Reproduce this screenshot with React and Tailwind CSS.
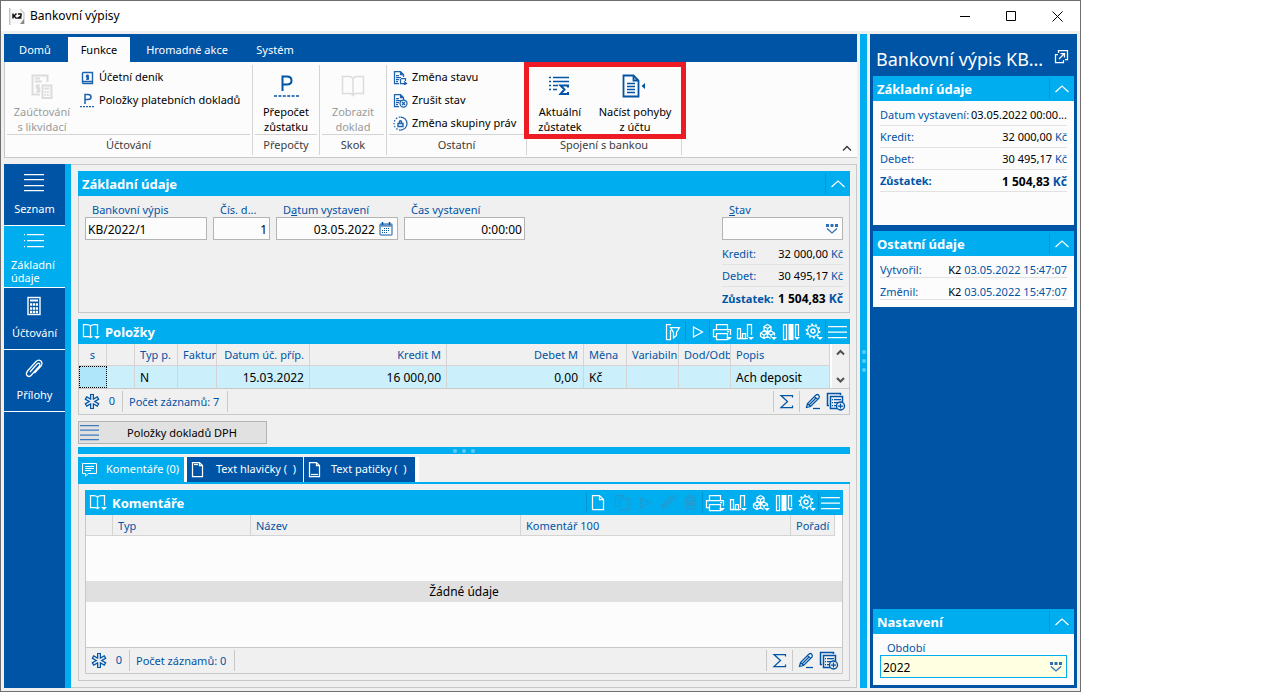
import clsx from 'clsx';

function Icon({ w = 18, h = 18, className, children }) {
    return (
        <svg width={w} height={h} viewBox={`0 0 ${w} ${h}`} className={clsx('shrink-0', className)} fill="none" stroke="currentColor" strokeWidth="1.25" aria-hidden="true">
            {children}
        </svg>
    );
}

/* ---------- icons ---------- */

const Caret = ({ x, y }) => <path d={`M${x} ${y}h6l-3 3z`} fill="currentColor" stroke="none" />;

const BookIcon = () => (
    <Icon w={19} h={17}>
        <path d="M8.500 3C7.500 1.500 6 1.500 4.500 1.500H1.500V13.500H6.500L8.500 14.500L10.500 13.500M8.500 3C9.500 1.500 11 1.500 12.500 1.500H15.500V11.500M8.500 3V14.500" />
        <Caret x={12} y={13} />
    </Icon>
);

const FilterIcon = () => (
    <Icon w={18} h={18}>
        <path d="M6 1.500H1.500V16.500H5.500V7M5.500 4.500H14.500L11.500 9.500V12.500L8.500 15V9.500Z" />
    </Icon>
);

const PlayIcon = () => (
    <Icon w={12} h={14}>
        <path d="M1.500 2V12L10.500 7Z" />
    </Icon>
);

const PrinterIcon = () => (
    <Icon w={20} h={18}>
        <path d="M4.500 6.500V1.500H15.500V6.500M4.500 13.500H1.500V6.500H18.500V12M4.500 10.500H15.500V16.500H4.500ZM15 8.500H17" />
        <Caret x={14} y={14} />
    </Icon>
);

const ChartIcon = () => (
    <Icon w={18} h={18}>
        <path d="M1.500 5.500H4.500V15.500H1.500ZM6.500 10.500H9.500V15.500H6.500ZM11.500 14V1.500H15.500V12" />
        <path d="M1 15.500H12" />
        <Caret x={12} y={14} />
    </Icon>
);

const CubesIcon = () => (
    <Icon w={18} h={18}>
        <path d="M8.500 1.500L12 3.500V7L8.500 9L5 7V3.500ZM5 8L8.500 10V13.500L5 15.500L1.500 13.500V10ZM12 8L15.500 10V12.500M12 8L8.500 10V13.500L11.500 15.500M5 3.500L8.500 5.500L12 3.500M8.500 5.500V9M1.500 10L5 12L8.500 10L12 12L15.500 10M5 12V15.500M12 12V14" />
        <Caret x={12} y={14} />
    </Icon>
);

const ColumnsIcon = () => (
    <Icon w={18} h={18}>
        <path d="M1.500 1.500H4.500V16.500H1.500ZM13.500 14V1.500H16.500V13" />
        <path d="M6.500 1H11.500V17H6.500Z" fill="currentColor" stroke="none" />
        <Caret x={12} y={14} />
    </Icon>
);

const GearIcon = () => (
    <Icon w={18} h={18}>
        <circle cx="8" cy="8" r="5.500" />
        <circle cx="8" cy="8" r="6.800" strokeWidth="1.400" strokeDasharray="2 2.270" />
        <circle cx="8" cy="8" r="2" strokeWidth="1.500" />
        <Caret x={12} y={14} />
    </Icon>
);

const MenuIcon = () => (
    <Icon w={20} h={16}>
        <path d="M0 2.500H19M0 8H19M0 13.500H19" />
    </Icon>
);

const NewIcon = () => (
    <Icon w={16} h={17}>
        <path d="M1.500 1.500H8.500L12.500 5.500V15.500H1.500ZM8.500 1.500V5.500H12.500" />
    </Icon>
);

const CopyIcon = () => (
    <Icon w={16} h={17}>
        <path d="M4 12.500H1.500V1.500H9.500V4M5.500 4.500H14.500V15.500H5.500Z" />
    </Icon>
);

const PencilIcon = ({ underline = true }) => (
    <Icon w={16} h={17}>
        <path d="M1.500 14.500L2.500 10.500L11 2Q12.500 1 13.500 2Q15 3.500 14 5L5.500 13.500ZM9.500 3.500L12.500 6.500M2.500 10.500L5.500 13.500M4.500 11.500L11 5" />
        {underline && <path d="M8 15.500H15" />}
    </Icon>
);

const TrashIcon = () => (
    <Icon w={13} h={17}>
        <path d="M1 3.500H12M4.500 3V1.500H8.500V3M2.500 4V14.500H10.500V4M4.500 6V12M6.500 6V12M8.500 6V12" />
    </Icon>
);

const SumIcon = () => (
    <Icon w={15} h={16}>
        <path d="M13.500 3.500V1.500H2L8.500 7.500L2 13.500H13.500V11.500" />
    </Icon>
);

const ListAddIcon = () => (
    <Icon w={20} h={20}>
        <path d="M3 13.500H1.500V1.500H14.500V3M11 16.500H4.500V4.500H16.500V10" strokeWidth="1.500" />
        <path d="M6 7.500H7M8 7.500H15M6 10.500H7M8 10.500H12M6 13.500H7M8 13.500H10" />
        <circle cx="14.500" cy="14" r="4" strokeWidth="1.400" />
        <path d="M12 14H17M14.500 11.500V16.500" />
    </Icon>
);

const StarIcon = () => (
    <Icon w={16} h={17}>
        <g stroke="#0054a6" strokeWidth="4">
            <path d="M8 1V16M1.500 4.700L14.500 12.300M1.500 12.300L14.500 4.700" />
        </g>
        <g stroke="#f0f0f0" strokeWidth="1.500">
            <path d="M8 2V15M2.600 5.300L13.400 11.700M2.600 11.700L13.400 5.300" />
        </g>
    </Icon>
);

const PickIcon = () => (
    <Icon w={14} h={12} className="text-[#2f70b5]">
        <path d="M1 1H4V4H1ZM5.500 1H8.500V4H5.500ZM10 1H13V4H10Z" fill="currentColor" stroke="none" />
        <path d="M2 5.500L7 10L12 5.500" />
    </Icon>
);

const CalendarIcon = () => (
    <Icon w={14} h={14} className="text-[#5c8fc4]">
        <rect x="1" y="2" width="12" height="11" rx="1" fill="#fff" strokeWidth="1.500" />
        <path d="M1 3.500H13" strokeWidth="2.500" />
        <path d="M3.500 0V3M10.500 0V3" stroke="#0054a6" strokeWidth="1.500" />
        <path d="M5 6.500H11M3 8.500H11M3 10.500H9" stroke="#0054a6" strokeWidth="1" strokeDasharray="1 1" />
    </Icon>
);

const ChevronUp = () => (
    <Icon w={16} h={10}>
        <path d="M1.500 8L8 2L14.500 8" />
    </Icon>
);

const InvoiceIcon = () => (
    <Icon w={24} h={26}>
        <path d="M10 21.500H2.500V2.500H17.500V9M5 5.500H10M5 8.500H12" strokeWidth="2" />
        <path d="M12.500 12.500H21.500V25H12.500ZM14.500 15.500H19.500" strokeWidth="2" />
        <path d="M14.500 19H20M14.500 22H20" strokeWidth="2" strokeDasharray="1.500 1" />
        <path d="M10 12.500H6.500V15H9.500V18.500H6M8 11V20" strokeWidth="1.500" />
    </Icon>
);

const LedgerIcon = () => (
    <Icon w={13} h={14}>
        <path d="M2.500 1.500H11.500V12.500H2.500Q1.500 12.500 1.500 11V2.500Q1.500 1.500 2.500 1.500ZM2 10.500H11.500" strokeWidth="1.400" />
        <path d="M8 4.500H5.500V6H7.500V8H5M6.500 3.500V9" />
    </Icon>
);

const PaySmallIcon = () => (
    <Icon w={15} h={15}>
        <path d="M5 11V1.500H8Q11 1.500 11 4Q11 6.500 8 6.500H5" strokeWidth="1.500" />
        <path d="M0 13.500H15" strokeDasharray="2 1" />
    </Icon>
);

const PayIcon = () => (
    <Icon w={25} h={24}>
        <path d="M8.500 17V2.500H13Q17.500 2.500 17.500 6.500Q17.500 10.500 13 10.500H8.500" strokeWidth="2" />
        <path d="M0 22H25" strokeWidth="1.500" strokeDasharray="3 1.400" />
    </Icon>
);

const OpenBookIcon = () => (
    <Icon w={24} h={22}>
        <path d="M12 4Q11 1.500 8 1.500H1.500V18.500H9Q11 18.500 12 20.500Q13 18.500 15 18.500H22.500V1.500H16Q13 1.500 12 4V20" strokeWidth="1.500" />
    </Icon>
);

const DocIcon = ({ kind }) => (
    <Icon w={15} h={15}>
        <path d="M6 13.500H1.500V1.500H7.500L10.500 4.500V7M7.500 1.500V4.500H10.500M3 5.500H6M3 7.500H8M3 9.500H6M3 11.500H5" />
        {kind === 'change' && <path d="M7.500 9V13.500H13M11 11.500L13.500 13.500L11 15M8 8.500H12.500V11" />}
        {kind === 'cancel' && (
            <>
                <circle cx="10.500" cy="10.500" r="3.500" fill="#fcfcfc" />
                <path d="M9 9L12 12M12 9L9 12" />
            </>
        )}
    </Icon>
);

const RightsIcon = () => (
    <Icon w={15} h={15}>
        <path d="M7.500 1A6.500 6.500 0 0 1 7.500 14" />
        <path d="M7.500 14A6.500 6.500 0 0 1 7.500 1" strokeDasharray="1.500 1.500" />
        <path d="M5 7.500H10V10.500H5ZM6.500 7V5.500Q7.500 4 8.500 5.500V7" strokeWidth="1.400" />
    </Icon>
);

const BalanceIcon = () => (
    <Icon w={24} h={20}>
        <path d="M5 1.500H21M5 5.500H21M5 9.500H10M5 13.500H9" strokeWidth="1.600" />
        <path d="M1 1.500H3M1 5.500H3M1 9.500H3M1 13.500H3" strokeWidth="1.600" />
        <path d="M20 11.500V9.500H12.500L16.500 13.500L12.500 18H20V16" strokeWidth="2" />
    </Icon>
);

const ImportIcon = () => (
    <Icon w={26} h={24}>
        <path d="M1.500 1.500H11.500L16.500 6.500V22.500H1.500ZM11.500 1.500V6.500H16.500" strokeWidth="1.800" />
        <path d="M5 9.500H13M5 12.500H13M5 15.500H13M5 18.500H13" strokeWidth="1.300" />
        <path d="M23 9V15L19.500 12Z" fill="currentColor" stroke="none" />
    </Icon>
);

const CommentIcon = () => (
    <Icon w={17} h={16}>
        <path d="M1.500 1.500H15.500V11.500H7.500L4.500 14V11.500H1.500ZM4 4.500H13M4 6.500H13M4 8.500H10" strokeWidth="1" />
    </Icon>
);

const TextIcon = ({ footer }) => (
    <Icon w={13} h={17}>
        <path d="M1.500 1.500H8.500L11.500 4.500V15.500H1.500ZM8.500 1.500V4.500H11.500" />
        <path d={footer ? 'M3 13.500H10' : 'M3 3.500H7'} />
    </Icon>
);

const NavIcon = ({ name }) => (
    <Icon w={24} h={22}>
        {name === 'list' && <path d="M1 2.500H21M1 7.500H21M1 13.500H21M1 18.500H21" />}
        {name === 'detail' && <path d="M4 4.500H21M4 10.500H21M4 16.500H21M1 4.500H2M1 10.500H2M1 16.500H2" />}
        {name === 'calc' && (
            <>
                <rect x="5" y="1.500" width="12" height="17" strokeWidth="1.400" />
                <path d="M7 4.500H15" strokeWidth="2" />
                <path d="M7 8.500H15M7 12.500H15M7 16H15" strokeWidth="2.400" strokeDasharray="2.200 .7" />
            </>
        )}
        {name === 'clip' && (
            <path d="M7 14L14 6Q15.500 4.500 16.500 5.500Q17.500 6.500 16.500 8L8 17.500Q6 19.500 4 17.500Q2.500 15.500 4.500 13L13 3.500Q15.500 1 18 3Q20 5.500 18 8L11.500 15" />
        )}
    </Icon>
);

/* ---------- shared parts ---------- */

function PanelHeader({ title, book, children }) {
    return (
        <div className="flex h-[25px] shrink-0 items-center bg-[#00adef] pr-px text-white">
            {book && (
                <button type="button" aria-label="Kniha" className="ml-1">
                    <BookIcon />
                </button>
            )}
            <h2 className="flex-1 truncate px-1 text-[13px] leading-5 font-bold">{title}</h2>
            {children}
        </div>
    );
}

function Collapse() {
    return (
        <button type="button" aria-label="Sbalit" className="flex h-[21px] w-6 items-center justify-center border-l border-[#0098d4]">
            <ChevronUp />
        </button>
    );
}

const Divider = () => <span className="h-[21px] w-px bg-[#0098d4]" />;

function Tool({ label, disabled, children }) {
    return (
        <button type="button" aria-label={label} disabled={disabled} className="flex h-5 w-[23px] items-center justify-center disabled:text-[#1f9bd2]">
            {children}
        </button>
    );
}

function CommonTools() {
    return (
        <>
            <Divider />
            <Tool label="Tisk"><PrinterIcon /></Tool>
            <Tool label="Graf"><ChartIcon /></Tool>
            <Tool label="Kostky"><CubesIcon /></Tool>
            <Tool label="Sloupce"><ColumnsIcon /></Tool>
            <Tool label="Nastavení"><GearIcon /></Tool>
            <Divider />
            <Tool label="Nabídka"><MenuIcon /></Tool>
        </>
    );
}

function PanelFooter({ count }) {
    return (
        <div className="flex h-[26px] shrink-0 items-center border-t border-[#c8c8c8] text-[11px] text-[#0054a6]">
            <button type="button" className="flex h-[21px] w-11 items-center justify-between border-r border-[#c8c8c8] pr-[7px] pl-[5px]">
                <StarIcon />
                <span>0</span>
            </button>
            <span className="h-[21px] border-r border-[#c8c8c8] pr-2 pl-1.5 leading-[21px]">Počet záznamů: {count}</span>
            <span className="flex-1" />
            <button type="button" aria-label="Součet" className="flex h-[21px] w-[26px] items-center justify-center border-l border-[#c8c8c8]"><SumIcon /></button>
            <button type="button" aria-label="Upravit" className="flex h-[21px] w-[26px] items-center justify-center border-l border-[#c8c8c8]"><PencilIcon /></button>
            <button type="button" aria-label="Přidat" className="flex h-[21px] w-6 items-center justify-center pr-0.5"><ListAddIcon /></button>
        </div>
    );
}

function SumRow({ label, value, unit, bold, line = true }) {
    return (
        <div className={clsx('flex h-[22px] items-center justify-between pt-0.5 text-[11px] whitespace-nowrap text-[#0054a6]', bold && 'font-bold', line && 'border-b border-[#e2e2e2]')}>
            <span>{label}</span>
            <span className={bold ? 'text-[12px]' : 'text-[11px]'}>
                <span className="text-black">{value}</span>
                {unit && ` ${unit}`}
            </span>
        </div>
    );
}

/* ---------- ribbon ---------- */

function BigButton({ icon, lines, disabled, className }) {
    return (
        <button type="button" disabled={disabled} className={clsx('flex flex-col items-center text-[11px] leading-[15px] whitespace-nowrap disabled:text-[#9b9b9b]', className)}>
            <span className={clsx('flex h-[39px] items-center pt-0.5', disabled ? 'text-[#dcdcdc]' : 'text-[#0054a6]')}>{icon}</span>
            <span>{lines[0]}</span>
            <span>{lines[1]}</span>
        </button>
    );
}

function SmallButton({ icon, label }) {
    return (
        <button type="button" className="flex h-[23px] items-center gap-1 text-[11px] whitespace-nowrap">
            <span className="flex w-[15px] justify-center text-[#1f63ae]">{icon}</span>
            {label}
        </button>
    );
}

function Group({ label, className, children }) {
    return (
        <div className={clsx('relative flex shrink-0 flex-col border-r border-[#d4d4d4]', className)}>
            <div className="mx-0.5 flex h-[70px] justify-center border-b border-[#d4d4d4]">{children}</div>
            <div className="text-center text-[11px] leading-5 text-[#3c3c3c]">{label}</div>
        </div>
    );
}

function Ribbon() {
    return (
        <div className="shrink-0">
            <div role="tablist" className="flex h-7 items-end bg-[#0054a6] text-[11px] text-white">
                <button type="button" role="tab" className="h-[25px] w-16 pt-0.5 pr-0.5">Domů</button>
                <button type="button" role="tab" aria-selected="true" className="h-[25px] w-[62px] bg-[#fcfcfc] pt-0.5 text-black">Funkce</button>
                <button type="button" role="tab" className="h-[25px] w-[114px] pt-0.5">Hromadné akce</button>
                <button type="button" role="tab" className="h-[25px] w-[62px] pt-0.5">Systém</button>
            </div>
            <div className="flex h-24 border-b border-l border-[#c8c8c8] bg-[#fcfcfc] pt-[3px] pb-0.5">
                <Group label="Účtování" className="w-[248px]">
                    <BigButton icon={<InvoiceIcon />} lines={['Zaúčtování', 's likvidací']} disabled className="w-[70px]" />
                    <div className="flex-1 pt-px pl-[3px]">
                        <SmallButton icon={<LedgerIcon />} label="Účetní deník" />
                        <SmallButton icon={<PaySmallIcon />} label="Položky platebních dokladů" />
                    </div>
                </Group>
                <Group label="Přepočty" className="w-[67px]">
                    <BigButton icon={<PayIcon />} lines={['Přepočet', 'zůstatku']} />
                </Group>
                <Group label="Skok" className="w-[67px]">
                    <BigButton icon={<OpenBookIcon />} lines={['Zobrazit', 'doklad']} disabled />
                </Group>
                <Group label="Ostatní" className="w-[140px]">
                    <div className="flex-1 pt-px pl-1">
                        <SmallButton icon={<DocIcon kind="change" />} label="Změna stavu" />
                        <SmallButton icon={<DocIcon kind="cancel" />} label="Zrušit stav" />
                        <SmallButton icon={<RightsIcon />} label="Změna skupiny práv" />
                    </div>
                </Group>
                <Group label="Spojení s bankou" className="w-[155px]">
                    <BigButton icon={<BalanceIcon />} lines={['Aktuální', 'zůstatek']} className="w-[62px]" />
                    <BigButton icon={<ImportIcon />} lines={['Načíst pohyby', 'z účtu']} className="flex-1" />
                    <span className="pointer-events-none absolute -top-[3px] -right-[5px] -left-[3px] h-[77px] border-5 border-[#ed1c24]" />
                </Group>
                <div className="flex flex-1 items-end justify-end pr-[5px] pb-0.5">
                    <button type="button" aria-label="Sbalit pás karet">
                        <Icon w={10} h={8}><path d="M1 5.500L5 1.500L9 5.500" stroke="#333" /></Icon>
                    </button>
                </div>
            </div>
        </div>
    );
}

/* ---------- left navigation ---------- */

const NAV = [
    { icon: 'list', label: 'Seznam' },
    { icon: 'detail', label: 'Základní údaje', active: true },
    { icon: 'calc', label: 'Účtování' },
    { icon: 'clip', label: 'Přílohy' },
];

function SideNav() {
    return (
        <nav className="w-[67px] shrink-0 border-r-6 border-[#00adef] bg-[#0054a6] text-white">
            {NAV.map((item) => (
                <button
                    key={item.label}
                    type="button"
                    className={clsx(
                        'flex h-[62px] w-full flex-col items-center border-b border-white text-[11px] leading-[13px]',
                        item.active ? 'bg-[#00adef] pt-1' : 'pt-2',
                    )}
                >
                    <NavIcon name={item.icon} />
                    <span className={item.active ? 'mt-1.5 w-full pl-[7px] text-left' : 'mt-2'}>{item.label}</span>
                </button>
            ))}
        </nav>
    );
}

/* ---------- basic data ---------- */

function Field({ id, label, value, className, align = 'text-right', children }) {
    return (
        <div className={className}>
            <label htmlFor={id} className="block pl-[7px] text-[11px] leading-[15px] whitespace-nowrap text-[#0054a6]">{label}</label>
            <div className="flex h-[23px] items-center border border-[#b4b4b4] bg-[#fcfcfc]">
                <input id={id} defaultValue={value} className={clsx('h-full w-full min-w-0 bg-transparent px-0.5 pt-0.5 text-[12px] outline-none', align)} />
                {children}
            </div>
        </div>
    );
}

function BasicData() {
    return (
        <section className="shrink-0">
            <PanelHeader title="Základní údaje"><Collapse /></PanelHeader>
            <div className="flex h-[117px] items-start gap-1.5 border border-t-0 border-[#c8c8c8] px-1.5 pt-1.5">
                <Field id="vypis" label="Bankovní výpis" value="KB/2022/1" align="text-left" className="w-[122px]" />
                <Field id="cislo" label="Čís. d..." value="1" className="w-[57px]" />
                <Field id="datum" label={<>D<u>a</u>tum vystavení</>} value="03.05.2022" className="w-[122px]">
                    <button type="button" aria-label="Kalendář" className="mr-1 ml-0.5"><CalendarIcon /></button>
                </Field>
                <Field id="cas" label="Čas vystavení" value="0:00:00" className="w-[121px]" />
                <div className="ml-auto w-[121px]">
                    <label htmlFor="stav" className="block pl-[7px] text-[11px] leading-[15px] text-[#0054a6]"><u>S</u>tav</label>
                    <div className="relative">
                        <select id="stav" className="block h-[23px] w-full appearance-none border border-[#b4b4b4] bg-[#fcfcfc] px-0.5 text-[12px] outline-none">
                            <option value=""></option>
                        </select>
                        <span className="pointer-events-none absolute top-[6px] right-1"><PickIcon /></span>
                    </div>
                    <div className="pt-[3px]">
                        <SumRow label="Kredit:" value="32 000,00" unit="Kč" />
                        <SumRow label="Debet:" value="30 495,17" unit="Kč" />
                        <SumRow label="Zůstatek:" value="1 504,83" unit="Kč" bold line={false} />
                    </div>
                </div>
            </div>
        </section>
    );
}

/* ---------- items ---------- */

const COLUMNS = [
    { title: 's', width: 'w-7', align: 'text-center', value: '' },
    { title: '', width: 'w-7', value: '' },
    { title: 'Typ p.', width: 'w-[43px]', value: 'N' },
    { title: 'Faktur', width: 'w-[39px]', value: '' },
    { title: 'Datum úč. příp.', width: 'w-[93px]', align: 'text-right', value: '15.03.2022' },
    { title: 'Kredit M', width: 'w-[137px]', align: 'text-right', value: '16 000,00' },
    { title: 'Debet M', width: 'w-[137px]', align: 'text-right', value: '0,00' },
    { title: 'Měna', width: 'w-[43px]', value: 'Kč' },
    { title: 'Variabiln', width: 'w-[52px]', value: '' },
    { title: 'Dod/Odb', width: 'w-[52px]', value: '' },
    { title: 'Popis', value: 'Ach deposit' },
];

function Items() {
    return (
        <section className="mt-1.5 shrink-0">
            <PanelHeader title="Položky" book>
                <Tool label="Filtr"><FilterIcon /></Tool>
                <Divider />
                <Tool label="Spustit"><PlayIcon /></Tool>
                <CommonTools />
            </PanelHeader>
            <div className="border border-t-0 border-[#c8c8c8]">
                <div className="flex">
                    <table className="w-full min-w-0 flex-1 table-fixed border-separate border-spacing-0">
                        <thead>
                            <tr className="h-[22px] text-[11px] text-[#0054a6]">
                                {COLUMNS.map((c, i) => (
                                    <th key={i} className={clsx('overflow-hidden border-r border-b border-[#d4d4d4] px-[5px] pt-0.5 pb-0 font-normal whitespace-nowrap', c.width, c.align || 'text-left')}>
                                        {c.title}
                                    </th>
                                ))}
                            </tr>
                        </thead>
                        <tbody>
                            <tr className="h-[22px] bg-[#cbeffb] text-[12px]">
                                {COLUMNS.map((c, i) => (
                                    <td key={i} className={clsx('overflow-hidden px-[5px] pt-0.5 pb-0 whitespace-nowrap', i === 0 ? 'border border-dotted border-black bg-[#b0e6fa]' : 'border-r border-[#d4d4d4]', c.align)}>
                                        {c.value}
                                    </td>
                                ))}
                            </tr>
                        </tbody>
                    </table>
                    <div className="flex w-[19px] flex-col items-center justify-between border-l-2 border-white py-1 text-[#505050]">
                        <Icon w={9} h={9}><path d="M1 6.500L4.500 3L8 6.500" strokeWidth="2" /></Icon>
                        <Icon w={9} h={9}><path d="M1 3L4.500 6.500L8 3" strokeWidth="2" /></Icon>
                    </div>
                </div>
                <PanelFooter count={7} />
            </div>
        </section>
    );
}

/* ---------- comments ---------- */

function Comments() {
    return (
        <section className="flex min-h-0 flex-1 flex-col">
            <PanelHeader title="Komentáře" book>
                <Divider />
                <Tool label="Nový"><NewIcon /></Tool>
                <Tool label="Kopírovat" disabled><CopyIcon /></Tool>
                <Tool label="Spustit" disabled><PlayIcon /></Tool>
                <Tool label="Upravit" disabled><PencilIcon underline={false} /></Tool>
                <Tool label="Smazat" disabled><TrashIcon /></Tool>
                <CommonTools />
            </PanelHeader>
            <div className="flex flex-1 flex-col border border-t-0 border-[#c8c8c8] bg-[#fcfcfc]">
                <div className="pr-[7px]">
                    <table className="w-full table-fixed border-separate border-spacing-0">
                        <thead>
                            <tr className="h-[21px] bg-[#f0f0f0] text-left text-[11px] text-[#0054a6]">
                                <th className="w-[27px] border-r border-b border-[#d4d4d4] p-0" />
                                <th className="w-[138px] border-r border-b border-[#d4d4d4] px-[5px] pt-0.5 pb-0 font-normal">Typ</th>
                                <th className="border-r border-b border-[#d4d4d4] px-[5px] pt-0.5 pb-0 font-normal">Název</th>
                                <th className="border-r border-b border-[#d4d4d4] px-[5px] pt-0.5 pb-0 font-normal">Komentář 100</th>
                                <th className="w-11 border-r border-b border-[#d4d4d4] px-[5px] pt-0.5 pb-0 font-normal">Pořadí</th>
                            </tr>
                        </thead>
                    </table>
                </div>
                <div className="flex flex-1 items-center">
                    <p className="w-full bg-[#e0e0e0] pt-px text-center text-[12px] leading-5">Žádné údaje</p>
                </div>
                <div className="bg-[#f0f0f0]"><PanelFooter count={0} /></div>
            </div>
        </section>
    );
}

function Tabs() {
    return (
        <div role="tablist" className="mt-[3px] flex h-[27px] shrink-0 border-b-2 border-[#00adef] text-[11px] text-white">
            <button type="button" role="tab" aria-selected="true" className="flex w-[106px] items-center gap-2 bg-[#00adef] pl-[3px] whitespace-nowrap">
                <CommentIcon />Komentáře (0)
            </button>
            <div className="flex gap-px bg-white pr-1 pl-[3px]">
                <button type="button" role="tab" className="flex w-[116px] items-center gap-3 bg-[#0054a6] pl-1 whitespace-pre"><TextIcon />Text hlavičky (  )</button>
                <button type="button" role="tab" className="flex w-[111px] items-center gap-2.5 bg-[#0054a6] pl-1 whitespace-pre"><TextIcon footer />Text patičky (  )</button>
            </div>
        </div>
    );
}

/* ---------- right panel ---------- */

function StampRow({ label, stamp }) {
    return (
        <div className="flex h-[22px] items-end justify-between border-b border-[#e2e2e2] text-[11px] leading-[15px] whitespace-nowrap text-[#0054a6]">
            <span>{label}</span>
            <span><span className="text-black">K2</span> {stamp}</span>
        </div>
    );
}

function Preview() {
    return (
        <aside className="flex w-[207px] shrink-0 flex-col bg-[#0054a6] p-[3px]">
            <div className="flex h-[39px] items-center justify-between pr-[5px] pl-[3px] text-white">
                <h1 className="pt-1 text-[18px] leading-6 whitespace-nowrap">Bankovní výpis KB...</h1>
                <button type="button" aria-label="Otevřít v okně">
                    <Icon w={15} h={15}>
                        <path d="M4 5.500H1.500V13.500H9.500V11M4.500 4V1.500H13.500V10.500H11" />
                        <path d="M5 10L10 5M6.500 4.500H10.500V8.500" />
                    </Icon>
                </button>
            </div>
            <section>
                <PanelHeader title="Základní údaje"><Collapse /></PanelHeader>
                <div className="h-[124px] bg-[#fcfcfc] px-[7px] pt-[3px]">
                    <SumRow label="Datum vystavení:" value="03.05.2022 00:00..." />
                    <SumRow label="Kredit:" value="32 000,00" unit="Kč" />
                    <SumRow label="Debet:" value="30 495,17" unit="Kč" />
                    <SumRow label="Zůstatek:" value="1 504,83" unit="Kč" bold />
                </div>
            </section>
            <section className="mt-1.5">
                <PanelHeader title="Ostatní údaje"><Collapse /></PanelHeader>
                <div className="bg-[#fcfcfc] px-[7px] pb-[7px]">
                    <StampRow label="Vytvořil:" stamp="03.05.2022 15:47:07" />
                    <StampRow label="Změnil:" stamp="03.05.2022 15:47:07" />
                </div>
            </section>
            <section className="mt-auto">
                <PanelHeader title="Nastavení"><Collapse /></PanelHeader>
                <div className="bg-[#fcfcfc] px-[7px] pt-1.5 pb-[7px]">
                    <label htmlFor="obdobi" className="block pl-[7px] text-[11px] leading-[15px] text-[#0054a6]">Období</label>
                    <div className="relative">
                        <select id="obdobi" className="block h-[23px] w-full appearance-none border border-[#00adef] bg-[#ffffe1] px-0.5 pt-0.5 text-[12px] outline-none">
                            <option>2022</option>
                        </select>
                        <span className="pointer-events-none absolute top-[6px] right-1"><PickIcon /></span>
                    </div>
                </div>
            </section>
        </aside>
    );
}

/* ---------- window ---------- */

function TitleBar() {
    return (
        <header className="flex h-[30px] shrink-0 items-center bg-white">
            <Icon w={16} h={17} className="ml-2">
                <path d="M.5 0V17" stroke="#c4c4c4" strokeWidth="2" />
                <path d="M2 1H11L15 5V16H2Z" fill="#f8f8f8" stroke="none" />
                <path d="M11 1L15 5V16" stroke="#c8c8c8" />
                <path d="M15 11V16H11Z" fill="#888" stroke="none" />
                <path d="M4 5.500V10.500M7.500 5.500L5 8L7.500 10.500M9 6H12V8L9 10H12.500" stroke="#111" strokeWidth="1.500" />
            </Icon>
            <span className="ml-[5px] flex-1 text-[12px]">Bankovní výpisy</span>
            <button type="button" aria-label="Minimalizovat" className="flex h-full w-[46px] items-center justify-center">
                <Icon w={10} h={10}><path d="M0 5.500H10" stroke="#000" strokeWidth="1" /></Icon>
            </button>
            <button type="button" aria-label="Maximalizovat" className="flex h-full w-[46px] items-center justify-center">
                <Icon w={10} h={10}><path d="M.5.500H9.500V9.500H.5Z" stroke="#000" strokeWidth="1" /></Icon>
            </button>
            <button type="button" aria-label="Zavřít" className="flex h-full w-[46px] items-center justify-center">
                <Icon w={11} h={11}><path d="M.5.500L10.500 10.500M10.500.500L.5 10.500" stroke="#000" strokeWidth="1" /></Icon>
            </button>
        </header>
    );
}

const Dots = ({ vertical }) => (
    <span className={clsx('flex gap-[5px]', vertical && 'flex-col')}>
        <i className="size-1 rounded-full bg-[#5ccbf5]" />
        <i className="size-1 rounded-full bg-[#5ccbf5]" />
        <i className="size-1 rounded-full bg-[#5ccbf5]" />
    </span>
);

export default function App() {
    return (
        <div className="min-h-screen bg-white pr-[183px] font-['Noto_Sans','Open_Sans',sans-serif] text-black">
            <div className="flex min-h-screen flex-col border border-[#6e6e6e] bg-[#f0f0f0]">
                <TitleBar />
                <div className="flex flex-1 gap-[3px] p-[3px]">
                    <div className="flex min-w-0 flex-1 flex-col">
                        <Ribbon />
                        <div className="mt-1.5 flex flex-1">
                            <SideNav />
                            <main className="flex min-w-0 flex-1 flex-col border border-l-0 border-[#c8c8c8] p-1.5 pl-[7px]">
                                <BasicData />
                                <Items />
                                <button type="button" className="mt-1.5 flex h-[23px] w-[189px] shrink-0 items-center border border-[#b4b4b4] bg-[#e1e1e1] text-[11px]">
                                    <Icon w={20} h={17} className="ml-px text-[#3f7cbd]">
                                        <path d="M0 1.500H19M0 6H19M0 11H19M0 15.500H19" />
                                    </Icon>
                                    <span className="flex-1 pt-px pr-0.5 text-center">Položky dokladů DPH</span>
                                </button>
                                <div className="mt-[3px] flex h-[7px] shrink-0 items-center justify-center bg-[#00adef]"><Dots /></div>
                                <Tabs />
                                <div className="flex flex-1 flex-col border border-t-0 border-[#c8c8c8] p-1.5">
                                    <Comments />
                                </div>
                            </main>
                        </div>
                    </div>
                    <div className="flex w-[7px] shrink-0 items-center justify-center bg-[#00adef]"><Dots vertical /></div>
                    <Preview />
                </div>
            </div>
        </div>
    );
}
